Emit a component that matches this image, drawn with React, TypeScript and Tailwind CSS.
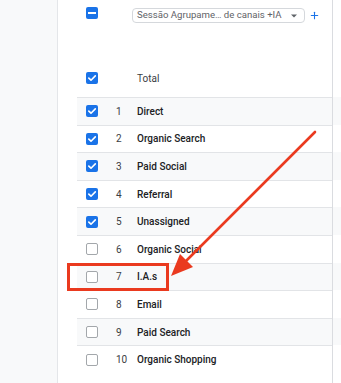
import { Plus } from 'lucide-react';

const rows = [
  { n: 1, label: 'Direct', checked: true },
  { n: 2, label: 'Organic Search', checked: true },
  { n: 3, label: 'Paid Social', checked: true },
  { n: 4, label: 'Referral', checked: true },
  { n: 5, label: 'Unassigned', checked: true },
  { n: 6, label: 'Organic Social', checked: false },
  { n: 7, label: 'I.A.s', checked: false },
  { n: 8, label: 'Email', checked: false },
  { n: 9, label: 'Paid Search', checked: false },
  { n: 10, label: 'Organic Shopping', checked: false },
];

const Checkbox = ({ state }: { state: 'on' | 'off' | 'mixed' }) => {
  if (state === 'off') {
    return <div className="h-[12px] w-[12px] shrink-0 rounded-[2px] border-[1.5px] border-[#a3a7ab] bg-white" />;
  }
  return (
    <div className="flex h-[12px] w-[12px] shrink-0 items-center justify-center rounded-[2px] bg-[#1a73e8]">
      {state === 'on' ? (
        <svg width="12" height="12" viewBox="0 0 12 12" fill="none">
          <path d="M2.8 6.1 L5 8.2 L9.3 3.9" stroke="white" strokeWidth="1.6" strokeLinecap="round" strokeLinejoin="round" />
        </svg>
      ) : (
        <div className="h-[2px] w-[8px] bg-white" />
      )}
    </div>
  );
};

const App = () => {
  return (
    <div className="relative flex h-[383px] w-[341px] overflow-hidden bg-white font-['Roboto',sans-serif]">
      <div className="w-[58px] shrink-0 border-r border-[#e4e6e9] bg-[#f8f9fa]" />

      <div className="flex flex-1 flex-col pl-[19px]">
        {/* header */}
        <div className="flex h-[59px]">
          <div className="flex w-[255px] items-start pl-[9px] pt-[7px]">
            <Checkbox state="mixed" />
            <div className="ml-[34px] mt-[1px] flex h-[15px] w-[173px] items-center rounded-[4px] border border-[#d5d8dc] pl-[4px] pr-[7px] text-[9.6px] text-[#5f6368]">
              <span className="flex-1 whitespace-nowrap">Sessão Agrupame… de canais +IA</span>
              <svg width="6" height="4" viewBox="0 0 6 4" className="shrink-0">
                <path d="M0 0.5 L6 0.5 L3 3.5 Z" fill="#5f6368" />
              </svg>
            </div>
            <Plus className="ml-[4px] mt-[3px] h-[11px] w-[11px] text-[#1a73e8]" strokeWidth={2.4} />
          </div>
          <div className="flex-1 border-l border-[#dadce0]" />
        </div>

        <div className="flex h-[38px]">
          <div className="flex w-[255px] items-center pl-[9px]">
            <Checkbox state="on" />
            <span className="ml-[39px] text-[10px] text-[#3c4043]">Total</span>
          </div>
          <div className="flex-1 border-l border-[#dadce0]" />
        </div>

        {rows.map((r, i) => (
          <div key={r.n} className={`flex h-[27.6px] ${i % 2 === 0 ? 'bg-[#f8f9fa]' : 'bg-white'}`}>
            <div className="flex w-[255px] items-center border-t border-[#e2e4e7] pl-[9px]">
              <Checkbox state={r.checked ? 'on' : 'off'} />
              <span className="ml-[18px] w-[21px] text-[10px] text-[#3c4043]">{r.n}</span>
              <span className="text-[10px] font-medium text-[#202124]">{r.label}</span>
            </div>
            <div className="flex-1 border-l border-[#dadce0]" />
          </div>
        ))}
        <div className="flex flex-1">
          <div className="w-[255px]" />
          <div className="flex-1 border-l border-[#dadce0]" />
        </div>
      </div>

      {/* annotation box */}
      <div className="absolute left-[67px] top-[263px] h-[28px] w-[102px] border-[3px] border-[#ea3a1f]" />

      {/* annotation arrow */}
      <svg className="pointer-events-none absolute left-0 top-0" width="341" height="383" viewBox="0 0 341 383">
        <line x1="315" y1="132" x2="184" y2="263" stroke="#ea3a1f" strokeWidth="2.6" strokeLinecap="round" />
        <path d="M171 276 L180 254 L193 267 Z" fill="#ea3a1f" />
      </svg>
    </div>
  );
};

export default App;
